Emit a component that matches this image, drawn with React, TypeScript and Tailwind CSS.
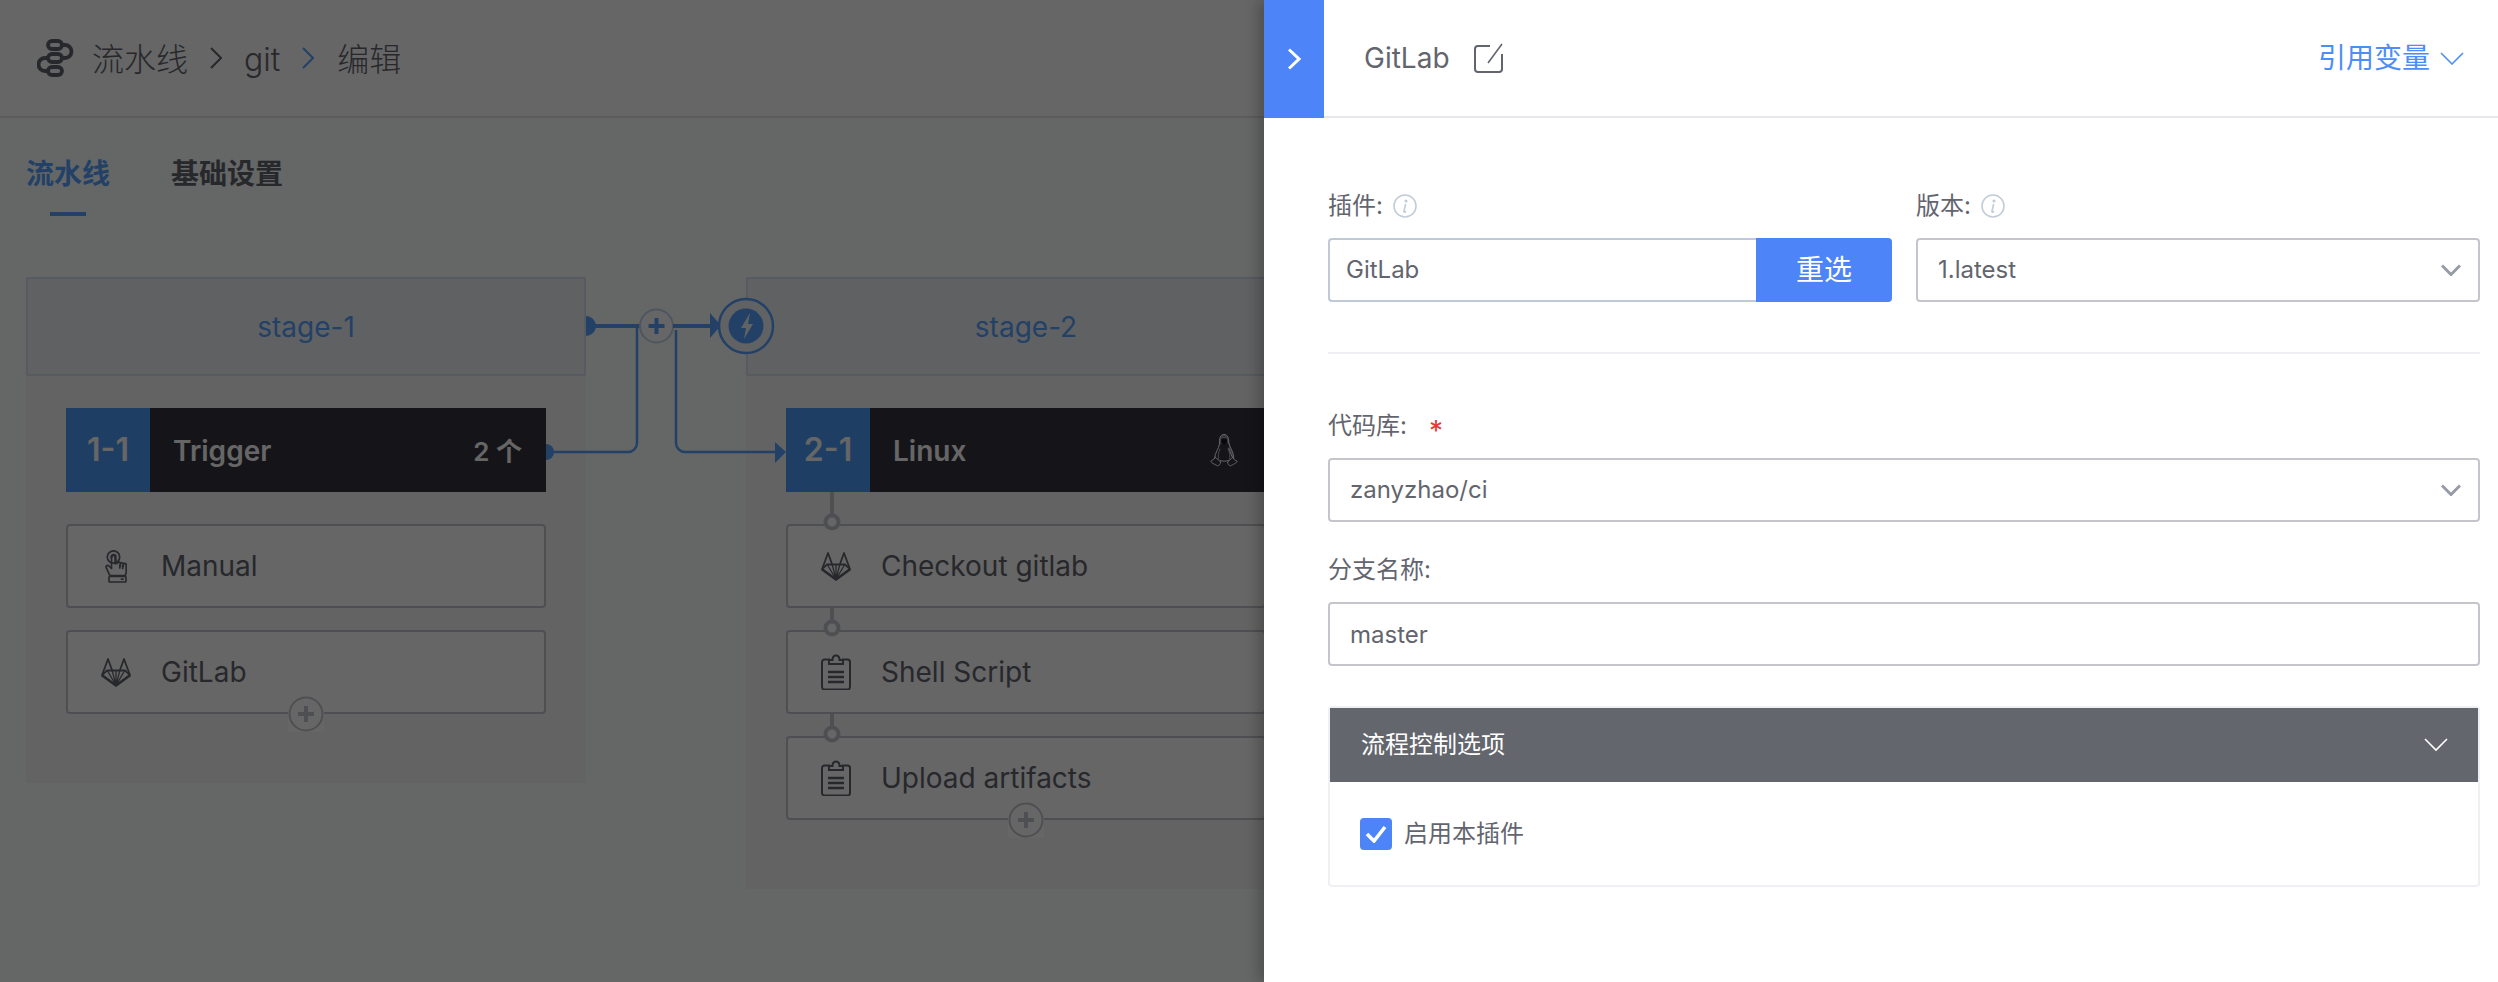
import React from 'react';

const BLUE = '#4d84f8';
const LINE_BLUE = '#58a4ff';

function LogoIcon() {
  return (
    <svg width="38" height="38" viewBox="0 0 38 38" fill="none" stroke="#63656e" strokeWidth="3.8" strokeLinecap="round">
      <rect x="11" y="2" width="14" height="8" rx="4" />
      <rect x="11" y="15" width="14" height="8" rx="4" />
      <rect x="11" y="28" width="14" height="8" rx="4" />
      <path d="M25 6h3a6.5 6.5 0 0 1 0 13h-3" />
      <path d="M11 19H8a6.5 6.5 0 0 0 0 13h3" />
    </svg>
  );
}

function Chevron({ color }: { color: string }) {
  return (
    <svg width="12" height="22" viewBox="0 0 12 22" fill="none" stroke={color} strokeWidth="2">
      <path d="M1 1l10 10L1 21" />
    </svg>
  );
}

function HandIcon() {
  return (
    <svg width="22" height="33" viewBox="0 0 22 33" fill="none" stroke="#63656e" strokeWidth="1.7" strokeLinejoin="round" strokeLinecap="round">
      <circle cx="8.5" cy="7" r="6.2" />
      <path d="M6.5 7a2 2 0 0 1 4 0v6.5" strokeWidth="2.4" />
      <path d="M6.5 7v11.5L3.8 16c-1.4-1.2-3.4 0-2.6 1.7l3.6 7.8h15.6l.8-3.4V15c0-2-2.6-2-2.9-.3v1.5-2c0-1.9-2.8-1.9-3 0v1.8-2.5c0-1.9-2.8-1.8-2.9 0" />
      <path d="M14.8 15v3M17.7 15.5v3" />
      <rect x="4" y="26.5" width="17" height="5.5" rx="0.8" />
      <path d="M16.5 29.2h1.5" />
    </svg>
  );
}

function GitlabIcon() {
  return (
    <svg width="30" height="29" viewBox="0 0 30 29" fill="none" stroke="#63656e" strokeWidth="1.8" strokeLinejoin="round">
      <path d="M15 27.5L1 17.2 7 1l4.2 11.5h7.6L23 1l6 16.2z" />
      <path d="M1 17.2l5-4.7h5.2M29 17.2l-5-4.7h-5.2" />
      <path d="M15 27.5L6.6 13M15 27.5L11.2 12.5M15 27.5V12.5M15 27.5l3.8-15M15 27.5L23.4 13" strokeWidth="1.3" />
      <path d="M1 17.2l14 10.3 14-10.3" strokeWidth="2.6" />
    </svg>
  );
}

function ClipboardIcon() {
  return (
    <svg width="30" height="36" viewBox="0 0 30 36" fill="none" stroke="#63656e" strokeWidth="2">
      <path d="M9 5.5H3.5A2.5 2.5 0 0 0 1 8v25a2.5 2.5 0 0 0 2.5 2.5h23A2.5 2.5 0 0 0 29 33V8a2.5 2.5 0 0 0-2.5-2.5H21" />
      <path d="M8 10V6h3.5c0-6 7-6 7 0H22v4z" />
      <path d="M7 18h16M7 23h16M7 28h16" strokeWidth="2.4" />
    </svg>
  );
}

function PenguinIcon() {
  return (
    <svg width="28" height="33" viewBox="0 0 28 33" fill="none" stroke="#ffffff" strokeWidth="1" strokeLinejoin="round" strokeLinecap="round">
      {/* head */}
      <path d="M9.500 10C9 4 10.500.5 14 .5s5 3.500 4.800 8.500" fill="#ffffff" fillOpacity="0.45" />
      <path d="M11.500 4.500h5l.8 4-3.300 2.500-3-2.500z" fill="#15151a" stroke="none" />
      {/* body sides */}
      <path d="M9.500 10C9 15 5 18 4.500 24.500" />
      <path d="M18.800 9c1 5 5.200 9 5 15.500-2.200-.5-3-6-5-10" fill="#ffffff" fillOpacity="0.4" />
      <path d="M10 15c-1.500 3-2 6-1.500 10M18 15c1.500 3 2.200 6 1.700 10" strokeOpacity="0.6" />
      <path d="M10 26.500c2.500 1 6 1 8.500 0" />
      {/* feet */}
      <path d="M5.500 23.500C3.500 26 2 26 .8 27c-.3 1.500 4 3.500 6.800 4.800 2-.4 3-2 3-3.800-1.200-1.500-3.500-3-5.100-4.500z" />
      <path d="M22.500 23.500c1.500 2.500 3 2.800 4.700 3.800.3 1-4.500 3.500-6.700 4.500-2-.4-3-2-2.800-3.800 1-1.500 3.500-3 4.800-4.500z" />
    </svg>
  );
}

function AddButton() {
  return (
    <div className="absolute left-1/2 top-[64px] flex h-[36px] w-[36px] -translate-x-1/2 items-center justify-center bg-[#ffffff]">
      <svg width="36" height="36" viewBox="0 0 36 36" fill="none" stroke="#c4c6cc">
        <circle cx="18" cy="18" r="16.5" strokeWidth="2" />
        <path d="M18 10v16M10 18h16" strokeWidth="4" />
      </svg>
    </div>
  );
}

function Step({ icon, label, add }: { icon: React.ReactNode; label: string; add?: boolean }) {
  return (
    <div className="relative flex h-[84px] items-center rounded-[4px] border-2 border-[#c4c6cc] bg-[#ffffff]">
      <div className="flex w-[93px] justify-center pl-[2px]">{icon}</div>
      <span className="text-[28px] text-[#63656e]">{label}</span>
      {add && <AddButton />}
    </div>
  );
}

function Stage({
  title,
  id,
  name,
  right,
  children,
}: {
  title: string;
  id: string;
  name: string;
  right: React.ReactNode;
  children: React.ReactNode;
}) {
  return (
    <div className="w-[560px] shrink-0 bg-[#f7f7f8] pb-[69px]">
      <div className="flex h-[99px] items-center justify-center rounded-[2px] border-2 border-[#d8e2f2] bg-[#f0f2f8] text-[28px] text-[#58a4ff]">
        <span className="mt-[1px]">{title}</span>
      </div>
      <div className="mx-[40px] mt-[32px]">
        <div className="flex h-[84px] items-center bg-[#35353f] text-[#ffffff]">
          <div className="flex h-full w-[84px] items-center justify-center bg-[#4f9bfa] text-[32px] font-semibold">{id}</div>
          <span className="ml-[23px] mt-[2px] text-[28px] font-semibold">{name}</span>
          <div className="ml-auto flex items-center pr-[24px]">{right}</div>
        </div>
        <div className="mt-[32px] flex flex-col gap-[22px]">{children}</div>
      </div>
    </div>
  );
}

function Connectors() {
  const blue = LINE_BLUE;
  return (
    <svg className="pointer-events-none absolute left-0 top-0" width="1264" height="620" viewBox="0 277 1264 620" fill="none">
      {/* stage 1 to the plus button */}
      <path d="M586 316a10 10 0 0 1 0 20z" fill={blue} />
      <path d="M590 326h50" stroke={blue} strokeWidth="4" />
      <path d="M546 452h82a9 9 0 0 0 9-9V326" stroke={blue} strokeWidth="2.5" />
      <path d="M546 444a8 8 0 0 1 0 16z" fill={blue} />
      {/* plus button */}
      <circle cx="656.5" cy="326" r="16.5" fill="#ffffff" stroke="#c3d4ef" strokeWidth="2" />
      <path d="M656.5 318v16M648.5 326h16" stroke={blue} strokeWidth="4" />
      {/* plus to stage 2 */}
      <path d="M673 326h40" stroke={blue} strokeWidth="4" />
      <path d="M710 313l11 12.5-11 12.5z" fill={blue} />
      <path d="M676 330v113a9 9 0 0 0 9 9h92" stroke={blue} strokeWidth="2.5" />
      <path d="M775 442l11 10-11 11z" fill={blue} />
      {/* trigger badge */}
      <circle cx="746" cy="326" r="27" fill="#f3f4f8" stroke={blue} strokeWidth="2.5" />
      <circle cx="746" cy="326" r="17.5" fill={blue} />
      <path d="M750 313l-9 15h5l-2 11 9-15h-5z" fill="#f3f4f8" />
      {/* step joints in stage 2 */}
      <path d="M832 492v24M832 608v14M832 714v14" stroke="#c4c6cc" strokeWidth="4" />
      <circle cx="832" cy="522" r="6.5" fill="#ffffff" stroke="#c4c6cc" strokeWidth="4" />
      <circle cx="832" cy="628" r="6.5" fill="#ffffff" stroke="#c4c6cc" strokeWidth="4" />
      <circle cx="832" cy="734" r="6.5" fill="#ffffff" stroke="#c4c6cc" strokeWidth="4" />
    </svg>
  );
}

function InfoIcon() {
  return (
    <svg width="24" height="24" viewBox="0 0 24 24" fill="none" stroke="#c3cdd7" strokeWidth="1.6">
      <circle cx="12" cy="12" r="11" />
      <path d="M12.5 10.5l-1.6 7c-.1.6.4.9 1.6.2" strokeLinecap="round" />
      <circle cx="13" cy="7" r="0.8" fill="#c3cdd7" />
    </svg>
  );
}

function SelectArrow() {
  return (
    <svg width="20" height="12" viewBox="0 0 20 12" fill="none" stroke="#979ba5" strokeWidth="3">
      <path d="M1 1.5l9 9 9-9" />
    </svg>
  );
}

function Label({ text, info, required }: { text: string; info?: boolean; required?: boolean }) {
  return (
    <div className="mb-[16px] flex h-[32px] items-center text-[24px] text-[#63656e]">
      <span>{text}</span>
      {info && (
        <span className="ml-[10px]">
          <InfoIcon />
        </span>
      )}
      {required && <span className="ml-[22px] mt-[10px] text-[28px] leading-none text-[#ea3636]">*</span>}
    </div>
  );
}

function Select({ value }: { value: string }) {
  return (
    <div className="flex h-[64px] items-center justify-between rounded-[4px] border-2 border-[#c4c6cc] bg-[#ffffff] pl-[20px] pr-[17px] text-[24px] text-[#63656e]">
      <span>{value}</span>
      <SelectArrow />
    </div>
  );
}

function Drawer() {
  return (
    <div className="absolute right-0 top-0 flex h-full w-[1234px] flex-col bg-[#ffffff] shadow-[-6px_0_12px_rgba(0,0,0,0.22)]">
      <div className="flex h-[118px] shrink-0 border-b-2 border-[#e6e7eb]">
        <div className="flex h-[118px] w-[60px] shrink-0 items-center justify-center bg-[#4d84f8]">
          <svg width="14" height="22" viewBox="0 0 14 22" fill="none" stroke="#ffffff" strokeWidth="3">
            <path d="M2 1.500l10 9.500-10 9.500" />
          </svg>
        </div>
        <div className="ml-[40px] flex items-center">
          <span className="text-[28px] text-[#63656e]">GitLab</span>
          <svg className="ml-[24px]" width="29" height="30" viewBox="0 0 29 30" fill="none" stroke="#63656e" strokeWidth="2">
            <path d="M16 3H4a3 3 0 0 0-3 3v20a3 3 0 0 0 3 3h21a3 3 0 0 0 3-3V11" />
            <path d="M28 1L14 20" strokeWidth="1.6" />
          </svg>
        </div>
        <div className="ml-auto flex items-center pr-[34px] text-[28px] text-[#4d8df8]">
          <span>引用变量</span>
          <svg className="ml-[10px]" width="24" height="13" viewBox="0 0 24 13" fill="none" stroke="#4d8df8" strokeWidth="1.6">
            <path d="M1 1l11 11L23 1" />
          </svg>
        </div>
      </div>

      <div className="pl-[64px] pr-[18px] pt-[72px]">
        <div className="grid grid-cols-2 gap-x-[24px]">
          <div>
            <Label text="插件:" info />
            <div className="flex h-[64px]">
              <div className="flex flex-1 items-center rounded-l-[4px] border-2 border-r-0 border-[#c0cad7] pl-[16px] text-[24px] text-[#63656e]">
                GitLab
              </div>
              <div className="flex w-[136px] items-center justify-center rounded-r-[4px] bg-[#4d84f8] text-[28px] text-[#ffffff]">重选</div>
            </div>
          </div>
          <div>
            <Label text="版本:" info />
            <Select value="1.latest" />
          </div>
        </div>

        <div className="mt-[50px] h-[2px] bg-[#eef0f4]" />

        <div className="mt-[56px]">
          <Label text="代码库:" required />
          <Select value="zanyzhao/ci" />
        </div>

        <div className="mt-[32px]">
          <Label text="分支名称:" />
          <div className="flex h-[64px] items-center rounded-[4px] border-2 border-[#c4c6cc] pl-[20px] pt-[2px] text-[24px] text-[#63656e]">master</div>
        </div>

        <div className="mt-[40px] rounded-[4px] border-2 border-[#eef0f4]">
          <div className="flex h-[74px] items-center justify-between bg-[#63666d] pl-[31px] pr-[30px] text-[24px] text-[#ffffff]">
            <span>流程控制选项</span>
            <svg width="24" height="14" viewBox="0 0 24 14" fill="none" stroke="#ffffff" strokeWidth="1.6">
              <path d="M1 1l11 11L23 1" />
            </svg>
          </div>
          <div className="flex h-[103px] items-center pl-[30px]">
            <div className="flex h-[32px] w-[32px] items-center justify-center rounded-[4px] bg-[#4d84f8]">
              <svg width="22" height="18" viewBox="0 0 22 18" fill="none" stroke="#ffffff" strokeWidth="3.6">
                <path d="M2 9l7 7L20 2" />
              </svg>
            </div>
            <span className="ml-[12px] text-[24px] text-[#63656e]">启用本插件</span>
          </div>
        </div>
      </div>
    </div>
  );
}

export default function App() {
  return (
    <div className="relative h-screen w-full overflow-hidden bg-[#fdfffe] font-['Inter','Noto_Sans_CJK_SC',sans-serif]">
      <div className="flex h-[118px] items-center border-b-2 border-[#e6e7eb] bg-[#ffffff] pl-[37px] text-[32px] font-light text-[#63656e]">
        <LogoIcon />
        <span className="ml-[17px] mt-[4px]">流水线</span>
        <span className="ml-[22px]">
          <Chevron color="#63656e" />
        </span>
        <span className="ml-[22px] mt-[4px]">git</span>
        <span className="ml-[22px]">
          <Chevron color={LINE_BLUE} />
        </span>
        <span className="ml-[23px] mt-[4px]">编辑</span>
      </div>

      <div className="flex gap-[61px] pl-[26px] pt-[36px] text-[28px] font-bold">
        <div className="flex flex-col items-center text-[#58a4ff]">
          <span className="leading-[40px]">流水线</span>
          <div className="mt-[18px] h-[4px] w-[36px] bg-[#58a4ff]" />
        </div>
        <span className="leading-[40px] text-[#63656e]">基础设置</span>
      </div>

      <div className="relative mt-[61px] flex items-start gap-[160px] pl-[26px]">
        <Stage title="stage-1" id="1-1" name="Trigger" right={<span className="mt-[2px] text-[26px] font-semibold">2 个</span>}>
          <Step icon={<HandIcon />} label="Manual" />
          <Step icon={<GitlabIcon />} label="GitLab" add />
        </Stage>
        <Stage title="stage-2" id="2-1" name="Linux" right={<span className="mr-[4px] flex"><PenguinIcon /></span>}>
          <Step icon={<GitlabIcon />} label="Checkout gitlab" />
          <Step icon={<ClipboardIcon />} label="Shell Script" />
          <Step icon={<ClipboardIcon />} label="Upload artifacts" add />
        </Stage>
        <Connectors />
      </div>

      <div className="absolute inset-0 bg-[#000000]/60" />
      <Drawer />
    </div>
  );
}
